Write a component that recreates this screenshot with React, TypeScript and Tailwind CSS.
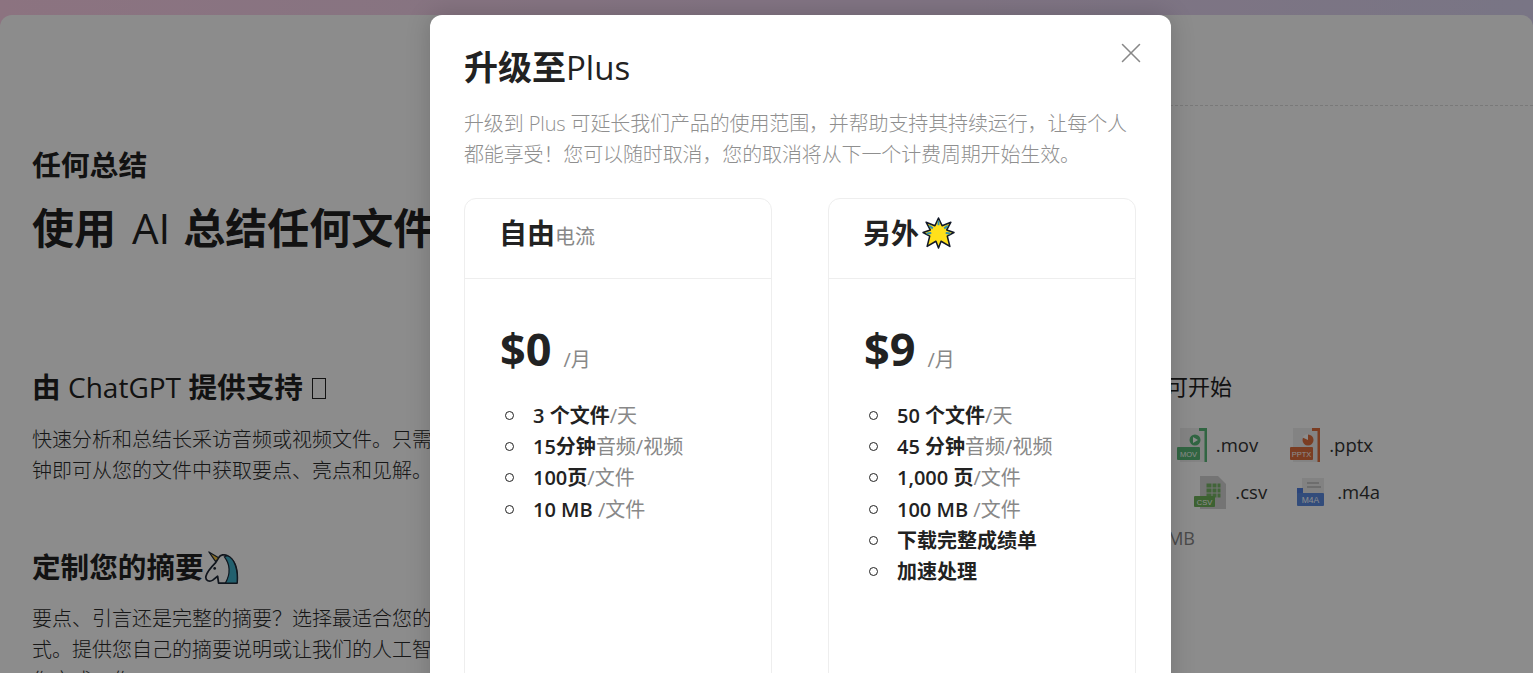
import { X } from "lucide-react";

const FONT = "font-['Open_Sans','Noto_Sans_CJK_SC',sans-serif]";

const FREE = [
  { bold: "3 个文件", rest: "/天" },
  { bold: "15分钟", rest: "音频/视频" },
  { bold: "100页", rest: "/文件" },
  { bold: "10 MB", rest: " /文件" },
];

const PLUS = [
  { bold: "50 个文件", rest: "/天" },
  { bold: "45 分钟", rest: "音频/视频" },
  { bold: "1,000 页", rest: "/文件" },
  { bold: "100 MB", rest: " /文件" },
  { bold: "下载完整成绩单", rest: "" },
  { bold: "加速处理", rest: "" },
];

const Unicorn = () => (
  <svg viewBox="0 0 36 36" className="inline-block w-[35px] h-[35px] align-[-6px]">
    <path d="M12 14 C8 18 3 24 2 28 C1 33 6 34 9 32 L14 28 L15 35 L34 35 C35 24 33 12 24 7 C21 5 17 6 15 9 Z" fill="#fff" stroke="#1f2937" strokeWidth="1.8" strokeLinejoin="round" />
    <path d="M24 7 C32 10 35 22 34 35 L22 35 C27 26 27 16 21 8 Z" fill="#3fb0c9" stroke="#1f2937" strokeWidth="1.2" />
    <path d="M15 9 L5 3 L12 13 Z" fill="#f5c542" stroke="#1f2937" strokeWidth="1.2" strokeLinejoin="round" />
    <circle cx="11" cy="20" r="1.4" fill="#1f2937" />
  </svg>
);

const Star = () => (
  <svg viewBox="0 0 32 32" className="inline-block ml-[3px] w-[33px] h-[33px]">
    <path d="M16 2 L19.5 9.5 L28 6 L24 13.5 L31 16 L24.5 19.5 L27 29.5 L18.5 24.5 L16 31 L13.5 24.5 L5 29.5 L7.5 19.5 L1 16 L8 13.5 L4 6 L12.5 9.5 Z" fill="#ffe01b" stroke="#111827" strokeWidth="1.5" strokeLinejoin="round" />
    <path d="M7 9.5 L10.5 12 M25 9.5 L21.5 12 M4.5 17 L9 16.5 M27.5 17 L23 16.5 M16 4.5 V9" stroke="#2f8fb0" strokeWidth="1.8" />
  </svg>
);

// file type badge: grey sheet + coloured label
const FileIcon = ({ label, color, kind }: { label: string; color: string; kind: "mov" | "pptx" | "csv" | "m4a" }) => (
  <svg viewBox="0 0 32 36" className="w-[32px] h-[36px] shrink-0">
    {(kind === "mov" || kind === "pptx") && (
      <>
        <path d="M5 1 H24 L32 1 V35 H5 Z" fill="#efefef" />
        <path d="M24 1 H32 V35 H29.5 V4 H24 Z" fill={color} />
        <circle cx="20" cy="13" r="5.5" fill={color} />
        {kind === "mov" && <path d="M18 10 L23 13 L18 16 Z" fill="#fff" />}
        {kind === "pptx" && <path d="M20 13 V7 A6 6 0 0 0 14.5 10.5 Z" fill="#fff" />}
        <rect x="2" y="20" width="23" height="13" rx="1" fill={color} />
        <text x="13.5" y="30" textAnchor="middle" fontSize="7.5" fill="#fff" fontFamily="Liberation Sans, sans-serif">{label}</text>
      </>
    )}
    {kind === "csv" && (
      <>
        <path d="M6 2 H24 L32 10 V35 H6 Z" fill="#d4d4d4" />
        <path d="M12 9 H27 V24 H12 Z M12 14 H27 M12 19 H27 M18 9 V24 M23 9 V24" fill="#79b768" stroke="#d4d4d4" strokeWidth="1" />
        <rect x="0" y="22" width="21" height="11" rx="1" fill={color} />
        <text x="10.5" y="30.5" textAnchor="middle" fontSize="7.5" fill="#fff" fontFamily="Liberation Sans, sans-serif">{label}</text>
      </>
    )}
    {kind === "m4a" && (
      <>
        <path d="M5 4 H27 V20 H5 Z" fill="#ededed" />
        <path d="M10 9 H22 M10 13 H24" stroke="#bbbbbb" strokeWidth="1.5" />
        <rect x="0" y="14" width="6" height="8" fill="#4f7fe0" />
        <rect x="0" y="19" width="27" height="13" rx="1" fill={color} />
        <text x="13.5" y="29" textAnchor="middle" fontSize="8.5" fill="#fff" fontFamily="Liberation Sans, sans-serif">{label}</text>
      </>
    )}
  </svg>
);

const PlanCard = ({ title, price, items }: { title: React.ReactNode; price: string; items: { bold: string; rest: string }[] }) => (
  <div className="h-[600px] rounded-xl border border-[#eeeeee]">
    <div className="h-[80px] border-b border-[#eeeeee] pl-[34px] pb-[12px] flex items-center">{title}</div>
    <div className="pl-[35px] pt-[40px]">
      <div className="h-[60px] flex items-center">
        <span className="text-[45px] font-bold text-[#222222]">{price}</span>
        <span className="ml-[12px] mt-[22px] text-[20px] text-[#888888]">/月</span>
      </div>
      <ul className="mt-[21px] flex flex-col">
        {items.map((item) => (
          <li key={item.bold} className="h-[31.2px] flex items-center text-[20px] leading-[31px]">
            <span className="ml-[5px] mr-[19px] w-[9px] h-[9px] rounded-full border border-[#222222] shrink-0" />
            <span className="whitespace-pre">
              <span className="font-semibold text-[#222222]">{item.bold}</span>
              <span className="text-[#888888]">{item.rest}</span>
            </span>
          </li>
        ))}
      </ul>
    </div>
  </div>
);

export default function App() {
  return (
    <div className={`relative w-[1533px] h-[673px] overflow-hidden pt-[15px] bg-gradient-to-r from-[#ffd2ea] to-[#dcd5f2] ${FONT}`}>
      {/* Page behind the dialog */}
      <main className="h-[700px] rounded-t-xl bg-white flex text-[#222222]">
        <section className="w-[800px] shrink-0 pl-[32px] pt-[130px]">
          <h2 className="text-[28.8px] leading-[40px] font-bold">任何总结</h2>
          <h1 className="mt-[15px] text-[42px] leading-[56px] font-bold whitespace-nowrap">
            使用<span className="ml-[16px] mr-[13px] font-medium">AI</span>总结任何文件
          </h1>

          <h3 className="mt-[111px] text-[28.6px] leading-[40px] font-bold">
            由 <span className="text-[28px] font-medium">ChatGPT</span> 提供支持{" "}
            <span className="inline-block w-[14px] h-[21px] border-[1.5px] border-[#222222] align-[-1px] ml-[2px]" />
          </h3>
          <p className="mt-[17px] w-[500px] text-[20px] leading-[31px] font-light text-[#2a2a2a]">
            快速分析和总结长采访音频或视频文件。只需上传，几秒钟即可从您的文件中获取要点、亮点和见解。
          </p>

          <h3 className="mt-[61px] text-[28.6px] leading-[40px] font-bold">
            定制您的摘要
            <Unicorn />
          </h3>
          <p className="mt-[16px] w-[500px] text-[20px] leading-[31px] font-light text-[#2a2a2a]">
            要点、引言还是完整的摘要？选择最适合您的摘要呈现方式。提供您自己的摘要说明或让我们的人工智能为您生成您完成工作。
          </p>
        </section>

        <section className="flex-1">
          <div className="h-[91px] border-b border-dashed border-[#dcdcdc]" />
          <p className="mt-[260px] w-[432px] text-right text-[22px] leading-[40px]">拖放文件即可开始</p>
          <div className="mt-[21px] w-[573px] h-[36px] flex justify-end items-center text-[18.5px] text-[#333333]">
            <FileIcon label="MOV" color="#59b978" kind="mov" />
            <span className="ml-[9px]">.mov</span>
            <span className="ml-[30px]" />
            <FileIcon label="PPTX" color="#e0703f" kind="pptx" />
            <span className="ml-[9px]">.pptx</span>
          </div>
          <div className="mt-[11px] w-[580px] h-[36px] flex justify-end items-center text-[18.5px] text-[#333333]">
            <FileIcon label="CSV" color="#6fb35b" kind="csv" />
            <span className="ml-[9px]">.csv</span>
            <span className="ml-[30px]" />
            <FileIcon label="M4A" color="#5b8be0" kind="m4a" />
            <span className="ml-[8px]">.m4a</span>
          </div>
          <p className="mt-[15px] w-[395px] text-right text-[18px] leading-[26px] text-[#888888]">最大 100 MB</p>
        </section>
      </main>

      {/* Dimmed backdrop */}
      <div className="absolute inset-0 bg-black/45" />

      {/* Dialog */}
      <div className="absolute left-[430px] top-[15px] w-[741px] h-[800px] rounded-xl bg-white pt-[30px] px-[34px] shadow-[0_0_24px_rgba(0,0,0,0.18)]">
        <button className="absolute top-[21px] right-[23px] text-[#888888]">
          <X size={34} strokeWidth={1.1} />
        </button>
        <h2 className="h-[44px] text-[34px] leading-[44px] font-bold text-[#222222]">
          升级至<span className="text-[33px] font-medium">Plus</span>
        </h2>
        <p className="mt-[19px] text-[20px] leading-[31px] font-light tracking-[-0.13px] text-[#8f8f8f]">
          升级到 Plus 可延长我们产品的使用范围，并帮助支持其持续运行，让每个人都能享受！您可以随时取消，您的取消将从下一个计费周期开始生效。
        </p>
        <div className="mt-[28px] grid grid-cols-[308px_308px] gap-x-[56px]">
          <PlanCard
            price="$0"
            items={FREE}
            title={
              <span className="text-[28px] font-bold text-[#222222]">
                自由<span className="text-[20px] font-normal text-[#888888]">电流</span>
              </span>
            }
          />
          <PlanCard
            price="$9"
            items={PLUS}
            title={
              <span className="flex items-center text-[28px] font-bold text-[#222222]">
                另外
                <Star />
              </span>
            }
          />
        </div>
      </div>
    </div>
  );
}
